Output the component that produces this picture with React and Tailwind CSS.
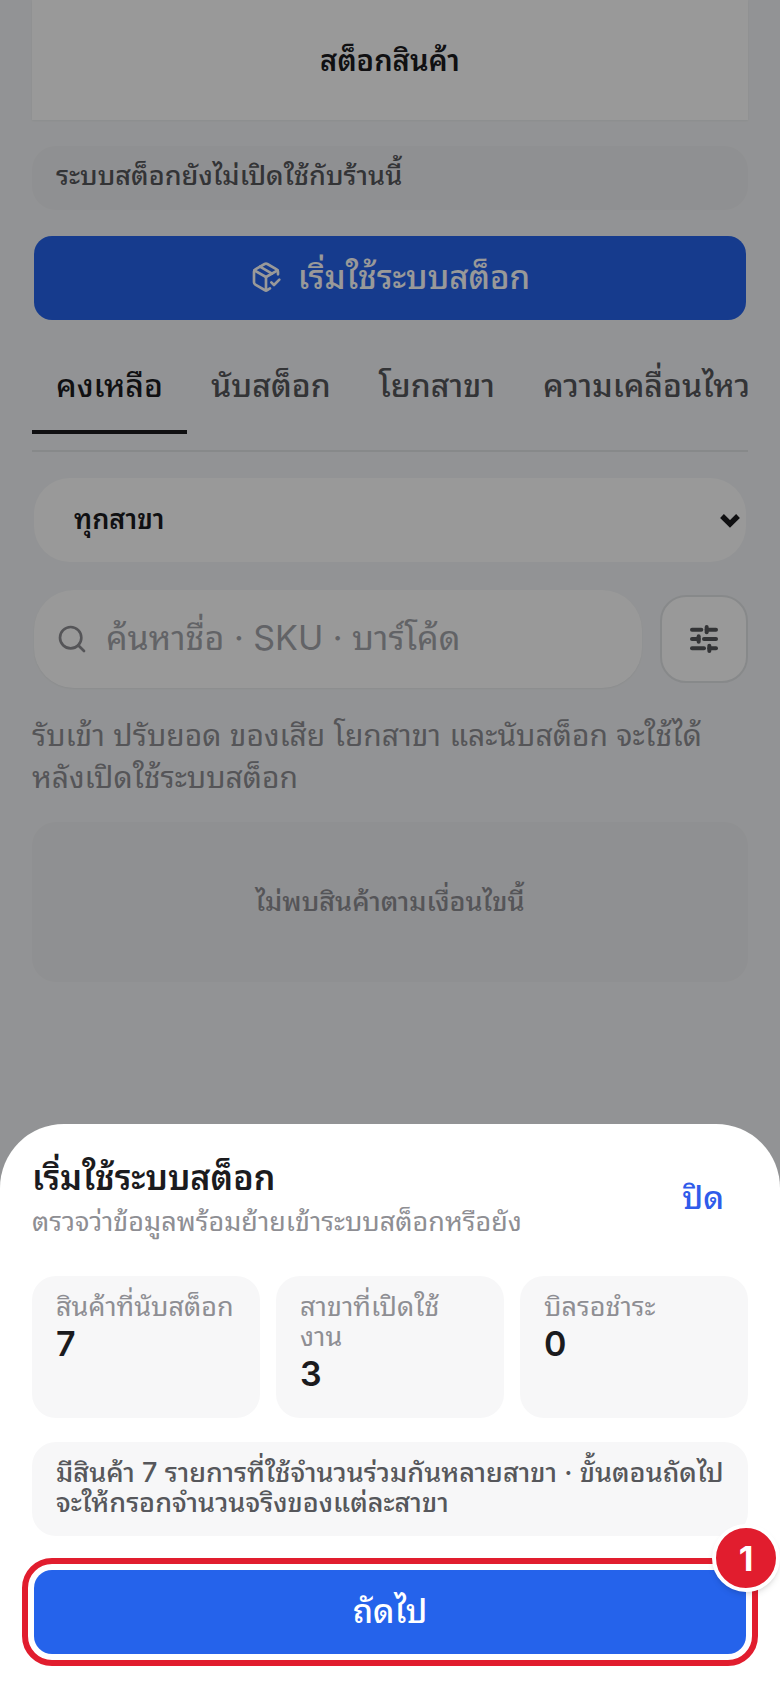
import { ChevronDown, PackageCheck, Search, SlidersHorizontal } from 'lucide-react'

const TABS = ['คงเหลือ', 'นับสต็อก', 'โยกสาขา', 'ความเคลื่อนไหว']

const STATS = [
  { label: 'สินค้าที่นับสต็อก', value: 7 },
  { label: 'สาขาที่เปิดใช้\nงาน', value: 3 },
  { label: 'บิลรอชำระ', value: 0 },
]

function StockPage() {
  return (
    <main className="px-8">
      <header className="flex h-[120px] items-center justify-center bg-white pt-[2px] shadow-xs">
        <h1 className="text-[29px] leading-[40px] font-semibold">สต็อกสินค้า</h1>
      </header>

      <p className="mt-[26px] rounded-[24px] bg-[#eff0f3] px-6 pt-[14px] pb-[18px] text-[27px] leading-[32px] font-medium text-[#56575b]">
        ระบบสต็อกยังไม่เปิดใช้กับร้านนี้
      </p>

      <div className="mt-[26px] px-[2px]">
        <button className="flex h-[84px] w-full items-center justify-center gap-4 rounded-[18px] bg-[#2563eb] pb-[2px] text-[33px] leading-[40px] font-medium text-white">
          <PackageCheck size={32} />
          เริ่มใช้ระบบสต็อก
        </button>
      </div>

      <nav className="mt-[26px] flex overflow-hidden border-b-2 border-[#e2e4e7] pb-4">
        {TABS.map((tab, i) => (
          <button
            key={tab}
            className={`h-[88px] shrink-0 border-b-4 px-6 pb-1 text-[32px] leading-[40px] font-medium whitespace-nowrap ${
              i === 0 ? 'border-[#1b1b1e] text-[#1b1b1e]' : 'border-transparent text-[#56575b]'
            }`}
          >
            {tab}
          </button>
        ))}
      </nav>

      <div className="relative mt-[26px] px-[2px]">
        <select
          aria-label="สาขา"
          className="h-[84px] w-full appearance-none rounded-[36px] bg-white px-10 text-[27px] font-semibold"
        >
          <option>ทุกสาขา</option>
        </select>
        <ChevronDown
          size={32}
          strokeWidth={4}
          strokeLinecap="butt"
          strokeLinejoin="miter"
          className="pointer-events-none absolute top-[26px] right-[2px]"
        />
      </div>

      <div className="mt-7 flex items-center gap-[18px] pl-[2px]">
        <label className="flex h-[98px] min-w-0 flex-1 items-center gap-[18px] rounded-[40px] bg-white px-[22px] shadow-xs">
          <Search size={32} className="shrink-0 text-[#8e8e93]" />
          <input
            type="search"
            aria-label="ค้นหา"
            placeholder="ค้นหาชื่อ · SKU · บาร์โค้ด"
            className="min-w-0 flex-1 pb-1 text-[34px] placeholder:text-[#a3a5ab]"
          />
        </label>
        <button
          aria-label="ตัวกรอง"
          className="flex size-[88px] items-center justify-center rounded-[26px] border-2 border-[#e2e4e7] bg-white text-[#56575b]"
        >
          <SlidersHorizontal size={32} strokeWidth={3} />
        </button>
      </div>

      <p className="mt-[26px] pr-6 text-[30px] leading-[42px] text-[#8e8e93]">
        รับเข้า ปรับยอด ของเสีย โยกสาขา และนับสต็อก จะใช้ได้หลังเปิดใช้ระบบสต็อก
      </p>

      <p className="mt-6 flex h-[160px] items-center justify-center rounded-[24px] bg-[#eff0f3] text-[27px] leading-[32px] font-medium text-[#8e8e93]">
        ไม่พบสินค้าตามเงื่อนไขนี้
      </p>
    </main>
  )
}

function StartSheet() {
  return (
    <section role="dialog" aria-labelledby="sheet-title" className="w-full rounded-t-[64px] bg-white px-8 pt-[30px] pb-[34px]">
      <div className="flex items-center justify-between">
        <div>
          <h2 id="sheet-title" className="mb-1 text-[34px] leading-[44px] font-semibold">เริ่มใช้ระบบสต็อก</h2>
          <p className="text-[27px] leading-[36px] text-[#8e8e93]">ตรวจว่าข้อมูลพร้อมย้ายเข้าระบบสต็อกหรือยัง</p>
        </div>
        <button className="h-[88px] px-6 text-[32px] font-medium text-[#2f5bea]">ปิด</button>
      </div>

      <dl className="mt-[34px] grid grid-cols-3 gap-4">
        {STATS.map((stat) => (
          <div key={stat.label} className="rounded-[24px] bg-[#f7f7f8] pt-4 pr-4 pb-[22px] pl-6">
            <dt className="text-[27px] leading-[30px] whitespace-pre-line text-[#8e8e93]">{stat.label}</dt>
            <dd className="text-[34px] leading-[44px] font-semibold">{stat.value}</dd>
          </div>
        ))}
      </dl>

      <p className="mt-6 rounded-[24px] bg-[#f7f7f8] px-6 pt-4 pb-[18px] text-[27px] leading-[30px] font-medium text-[#56575b]">
        มีสินค้า 7 รายการที่ใช้จำนวนร่วมกันหลายสาขา · ขั้นตอนถัดไปจะให้กรอกจำนวนจริงของแต่ละสาขา
      </p>

      <div className="relative mx-[2px] mt-[34px]">
        <button className="h-[84px] w-full rounded-[18px] bg-[#2563eb] pb-[2px] text-[33px] leading-[40px] font-medium text-white outline-6 outline-offset-6 outline-[#e11d2e]">
          ถัดไป
        </button>
        <span className="absolute -top-[46px] -right-[34px] flex size-[68px] items-center justify-center rounded-full border-4 border-white bg-[#e11d2e] text-[34px] font-bold text-white shadow-md">
          1
        </span>
      </div>
    </section>
  )
}

export default function App() {
  return (
    <div className="min-h-screen bg-[#f4f6f8] font-['Inter','Noto_Sans_Thai_Looped','Loma','Sarabun','Noto_Sans_Thai',sans-serif] text-[#1b1b1e]">
      <StockPage />
      <div className="fixed inset-0 flex items-end bg-black/40">
        <StartSheet />
      </div>
    </div>
  )
}
